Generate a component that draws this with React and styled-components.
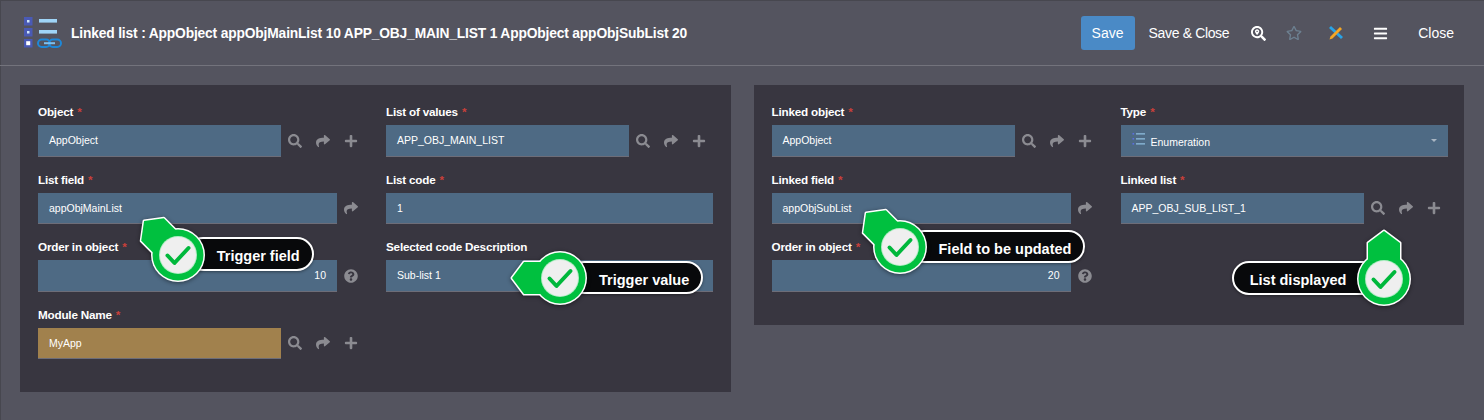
import styled, { createGlobalStyle } from "styled-components";
import {
  FaSearch,
  FaShare,
  FaPlus,
  FaQuestionCircle,
  FaSearchLocation,
  FaRegStar,
  FaBars,
} from "react-icons/fa";

const GlobalStyle = createGlobalStyle`
  html, body {
    margin: 0;
    padding: 0;
    background: #54545f;
  }
  body {
    font-family: "Liberation Sans", Arial, sans-serif;
    color: #fff;
  }
`;

const Page = styled.div`
  width: 1484px;
  height: 420px;
  box-sizing: border-box;
  overflow: hidden;
  background: #54545f;
  box-shadow: inset 1px 1px 0 #47474f;
`;

const Header = styled.header`
  display: flex;
  align-items: center;
  height: 66px;
  box-sizing: border-box;
  padding: 0 30px 0 24px;
  border-bottom: 1px solid #73737c;
`;

const Title = styled.h1`
  flex: 1;
  margin: 1px 0 0 9px;
  font-size: 13.8px;
  font-weight: 700;
  letter-spacing: -0.16px;
`;

const Actions = styled.div`
  display: flex;
  align-items: center;
  margin-top: 1px;
`;

const SaveButton = styled.button`
  width: 54px;
  height: 34px;
  border: none;
  border-radius: 3px;
  background: #4a8ac6;
  color: #fff;
  font: 14px "Liberation Sans", Arial, sans-serif;
`;

const TextAction = styled.button`
  margin-left: ${(p) => p.$left}px;
  padding: 0;
  border: none;
  background: none;
  color: #fff;
  font: 14px "Liberation Sans", Arial, sans-serif;
  letter-spacing: ${(p) => p.$spacing || 0}px;
`;

const IconAction = styled.span`
  display: flex;
  margin-left: ${(p) => p.$left}px;
  color: ${(p) => p.$color || "#fff"};
  font-size: ${(p) => p.$size || 15}px;
`;

const Body = styled.main`
  display: flex;
  align-items: flex-start;
  gap: 23px;
  padding: 19px 20px 0;
`;

const Panel = styled.section`
  position: relative;
  display: grid;
  grid-template-columns: 327px 327px;
  grid-auto-rows: 67.5px;
  column-gap: ${(p) => p.$gap}px;
  width: 711px;
  box-sizing: border-box;
  padding: 17px 0 20px 18px;
  background: #383640;
`;

const Field = styled.div`
  display: flex;
  flex-direction: column;
`;

const Label = styled.label`
  height: 23px;
  line-height: 20px;
  font-size: 11.7px;
  font-weight: 700;
  letter-spacing: -0.2px;

  span {
    margin-left: 4px;
    color: #c9403a;
  }
`;

const InputRow = styled.div`
  display: flex;
  align-items: center;
  height: 31.5px;
`;

const Input = styled.div`
  flex: 1;
  display: flex;
  align-items: center;
  justify-content: ${(p) => (p.$right ? "flex-end" : "flex-start")};
  height: 100%;
  box-sizing: border-box;
  padding: 0 11px;
  background: ${(p) => (p.$gold ? "#a1814d" : "#4e6a84")};
  border-bottom: 1px solid #6d6d78;
  font-size: 10.5px;
`;

const Select = styled(Input)`
  position: relative;
  gap: 5px;
  padding-top: 3px;
`;

const Caret = styled.i`
  position: absolute;
  right: 11px;
  top: 14px;
  border: 3px solid transparent;
  border-top: 3.5px solid #a9b6c3;
  border-bottom: none;
`;

const Tool = styled.span`
  display: flex;
  justify-content: center;
  width: 28px;
  color: #8b8b91;
  font-size: 14px;
`;

const CalloutWrap = styled.div`
  position: absolute;
  left: ${(p) => p.$x}px;
  top: ${(p) => p.$y}px;
  display: flex;
  flex-direction: ${(p) => (p.$flip ? "row-reverse" : "row")};
  align-items: center;
`;

const Pill = styled.div`
  box-sizing: border-box;
  height: 33.5px;
  margin-top: -2px;
  line-height: 35px;
  border: 2px solid #fff;
  border-radius: 17px;
  background: #08090b;
  box-shadow: 0 1px 3px rgba(0, 0, 0, 0.4);
  font-size: 14.5px;
  font-weight: 700;
  white-space: nowrap;
  ${(p) =>
    p.$flip
      ? "margin-right: -26px; padding: 0 34px 0 15.5px;"
      : "margin-left: -20px; padding: 0 12px 0 29px;"}
`;

const BadgeSvg = styled.svg`
  position: relative;
  z-index: 1;
  flex: none;
  overflow: visible;
  filter: drop-shadow(0 1px 2px rgba(0, 0, 0, 0.45));
`;

const HOUSE = "M0-48 16-36V-18H-16V-36Z";

const Badge = ({ angle }) => (
  <BadgeSvg width="56" height="56" viewBox="-28 -28 56 56">
    <g transform={`rotate(${angle})`}>
      <path d={HOUSE} fill="#00c03f" stroke="#fff" strokeWidth="3" strokeLinejoin="round" />
    </g>
    <circle r="27" fill="#fff" />
    <g transform={`rotate(${angle})`}>
      <path d={HOUSE} fill="#00c03f" />
    </g>
    <circle r="25.5" fill="#00c03f" />
    <circle r="19" fill="#fff" opacity="0.7" />
    <circle r="18" fill="#efefef" />
    <path
      d="M-10.5 0.5-3.5 8 10.5-7"
      fill="none"
      stroke="#00b83c"
      strokeWidth="4"
      strokeLinecap="round"
      strokeLinejoin="round"
    />
  </BadgeSvg>
);

const Callout = ({ x, y, angle, flip, children }) => (
  <CalloutWrap $x={x} $y={y} $flip={flip}>
    <Badge angle={angle} />
    <Pill $flip={flip}>{children}</Pill>
  </CalloutWrap>
);

const Logo = () => (
  <svg width="38" height="32" viewBox="0 0 38 32" style={{ flex: "none" }}>
    {[0, 11, 22].map((y, i) => (
      <g key={y}>
        <rect x="0" y={y} width="8.5" height="8.5" fill="#4a5ab5" />
        <rect
          x={i === 2 ? 2.2 : 3}
          y={y + (i === 2 ? 2.2 : 3)}
          width={i === 2 ? 4 : 2.5}
          height={i === 2 ? 4 : 2.5}
          fill={i === 2 ? "#fff" : "#cfe6fa"}
        />
      </g>
    ))}
    <rect x="15" y="2" width="18" height="3.6" fill="#9fd4f7" />
    <rect x="15" y="13" width="18" height="3.6" fill="#9fd4f7" />
    <g fill="none" stroke="#1e88d8" strokeWidth="2">
      <rect x="14" y="22.5" width="12" height="7.5" rx="3.75" />
      <rect x="25" y="22.5" width="12" height="7.5" rx="3.75" />
    </g>
    <rect x="20" y="25.2" width="11" height="2" fill="#7cc0f0" />
  </svg>
);

const CrossIcon = () => (
  <svg width="14" height="14" viewBox="0 0 14 14">
    <path d="M0 2 2 0 14 11 12 13Z" fill="#29a3e6" />
    <path d="M11 1 13 3 3.5 12.5 0.5 13.5 1.5 10.5Z" fill="#f5a623" />
  </svg>
);

const ListIcon = () => (
  <svg width="14" height="12" viewBox="0 0 14 12" style={{ marginTop: -6 }}>
    {[1, 6, 11].map((y) => (
      <g key={y}>
        <rect x="0.5" y={y - 1} width="1.6" height="1.6" fill="#5a6fe0" />
        <rect x="4" y={y - 0.6} width="9" height="1" fill="#9fd4f7" />
      </g>
    ))}
  </svg>
);

const Tools = ({ kind }) => {
  if (kind === "lookup")
    return (
      <>
        <Tool><FaSearch /></Tool>
        <Tool><FaShare /></Tool>
        <Tool><FaPlus /></Tool>
      </>
    );
  if (kind === "share")
    return <Tool><FaShare /></Tool>;
  if (kind === "help")
    return <Tool><FaQuestionCircle /></Tool>;
  return null;
};

const FormField = ({ label, required = true, value, tools, right, gold }) => (
  <Field>
    <Label>
      {label}
      {required && <span>*</span>}
    </Label>
    <InputRow>
      <Input $right={right} $gold={gold}>{value}</Input>
      <Tools kind={tools} />
    </InputRow>
  </Field>
);

export default function App() {
  return (
    <Page>
      <GlobalStyle />
      <Header>
        <Logo />
        <Title>
          Linked list : AppObject appObjMainList 10 APP_OBJ_MAIN_LIST 1 AppObject appObjSubList 20
        </Title>
        <Actions>
          <SaveButton>Save</SaveButton>
          <TextAction $left={14} $spacing={-0.35}>Save &amp; Close</TextAction>
          <IconAction $left={22}><FaSearchLocation /></IconAction>
          <IconAction $left={20} $color="#6d8091" $size={16}><FaRegStar /></IconAction>
          <IconAction $left={27}><CrossIcon /></IconAction>
          <IconAction $left={30}><FaBars /></IconAction>
          <TextAction $left={30}>Close</TextAction>
        </Actions>
      </Header>
      <Body>
        <Panel $gap={21}>
          <FormField label="Object" value="AppObject" tools="lookup" />
          <FormField label="List of values" value="APP_OBJ_MAIN_LIST" tools="lookup" />
          <FormField label="List field" value="appObjMainList" tools="share" />
          <FormField label="List code" value="1" />
          <FormField label="Order in object" value="10" tools="help" right />
          <FormField label="Selected code Description" required={false} value="Sub-list 1" />
          <FormField label="Module Name" value="MyApp" tools="lookup" gold />
          <Callout x={129.7} y={142} angle={-45}>Trigger field</Callout>
          <Callout x={512} y={165.3} angle={-90}>Trigger value</Callout>
        </Panel>
        <Panel $gap={22}>
          <FormField label="Linked object" value="AppObject" tools="lookup" />
          <Field>
            <Label>Type<span>*</span></Label>
            <InputRow>
              <Select>
                <ListIcon />
                Enumeration
                <Caret />
              </Select>
            </InputRow>
          </Field>
          <FormField label="Linked field" value="appObjSubList" tools="share" />
          <FormField label="Linked list" value="APP_OBJ_SUB_LIST_1" tools="lookup" />
          <FormField label="Order in object" value="20" tools="help" right />
          <Callout x={118} y={134.3} angle={-45}>Field to be updated</Callout>
          <Callout x={478.7} y={166} angle={0} flip>List displayed</Callout>
        </Panel>
      </Body>
    </Page>
  );
}
